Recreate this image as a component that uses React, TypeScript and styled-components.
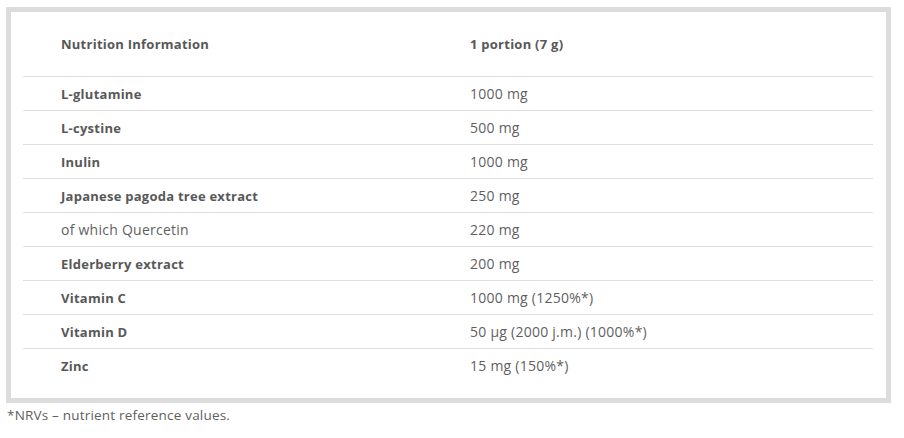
import React from "react";
import styled, { createGlobalStyle } from "styled-components";

const GlobalStyle = createGlobalStyle`
  html, body { margin: 0; padding: 0; background: #ffffff; }
  body { font-family: "Open Sans", "Liberation Sans", sans-serif; }
`;

const Page = styled.div`
  padding: 7px 0 0 6px;
  width: 885px;
`;

const Card = styled.div`
  border: 5px solid #dcdcdc;
  padding: 0 13px 15px 12px;
  box-sizing: border-box;
  height: 396px;
`;

const Table = styled.div`
  display: flex;
  flex-direction: column;
`;

const Row = styled.div<{ $head?: boolean; $last?: boolean }>`
  display: grid;
  grid-template-columns: 409px 1fr;
  align-items: center;
  height: ${(p) => (p.$head ? "64px" : "33px")};
  border-bottom: ${(p) => (p.$last ? "none" : "1px solid #dddddd")};
`;

const Cell = styled.div<{ $bold?: boolean }>`
  padding-left: 38px;
  font-size: ${(p) => (p.$bold ? "13px" : "14px")};
  letter-spacing: ${(p) => (p.$bold ? "0.25px" : "0.25px")};
  color: ${(p) => (p.$bold ? "#585858" : "#5f5f5f")};
  font-weight: ${(p) => (p.$bold ? 700 : 400)};
  white-space: nowrap;
`;

const Note = styled.div`
  margin: 3px 0 0 1px;
  font-size: 13.5px;
  letter-spacing: 0.2px;
  color: #5f5f5f;
`;

const rows: { name: string; value: string; bold: boolean }[] = [
  { name: "L-glutamine", value: "1000 mg", bold: true },
  { name: "L-cystine", value: "500 mg", bold: true },
  { name: "Inulin", value: "1000 mg", bold: true },
  { name: "Japanese pagoda tree extract", value: "250 mg", bold: true },
  { name: "of which Quercetin", value: "220 mg", bold: false },
  { name: "Elderberry extract", value: "200 mg", bold: true },
  { name: "Vitamin C", value: "1000 mg (1250%*)", bold: true },
  { name: "Vitamin D", value: "50 µg (2000 j.m.) (1000%*)", bold: true },
  { name: "Zinc", value: "15 mg (150%*)", bold: true },
];

export default function App() {
  return (
    <>
      <GlobalStyle />
      <Page>
        <Card>
          <Table>
            <Row $head>
              <Cell $bold>Nutrition Information</Cell>
              <Cell $bold>1 portion (7 g)</Cell>
            </Row>
            {rows.map((r, i) => (
              <Row key={r.name} $last={i === rows.length - 1}>
                <Cell $bold={r.bold}>{r.name}</Cell>
                <Cell>{r.value}</Cell>
              </Row>
            ))}
          </Table>
        </Card>
        <Note>*NRVs – nutrient reference values.</Note>
      </Page>
    </>
  );
}
